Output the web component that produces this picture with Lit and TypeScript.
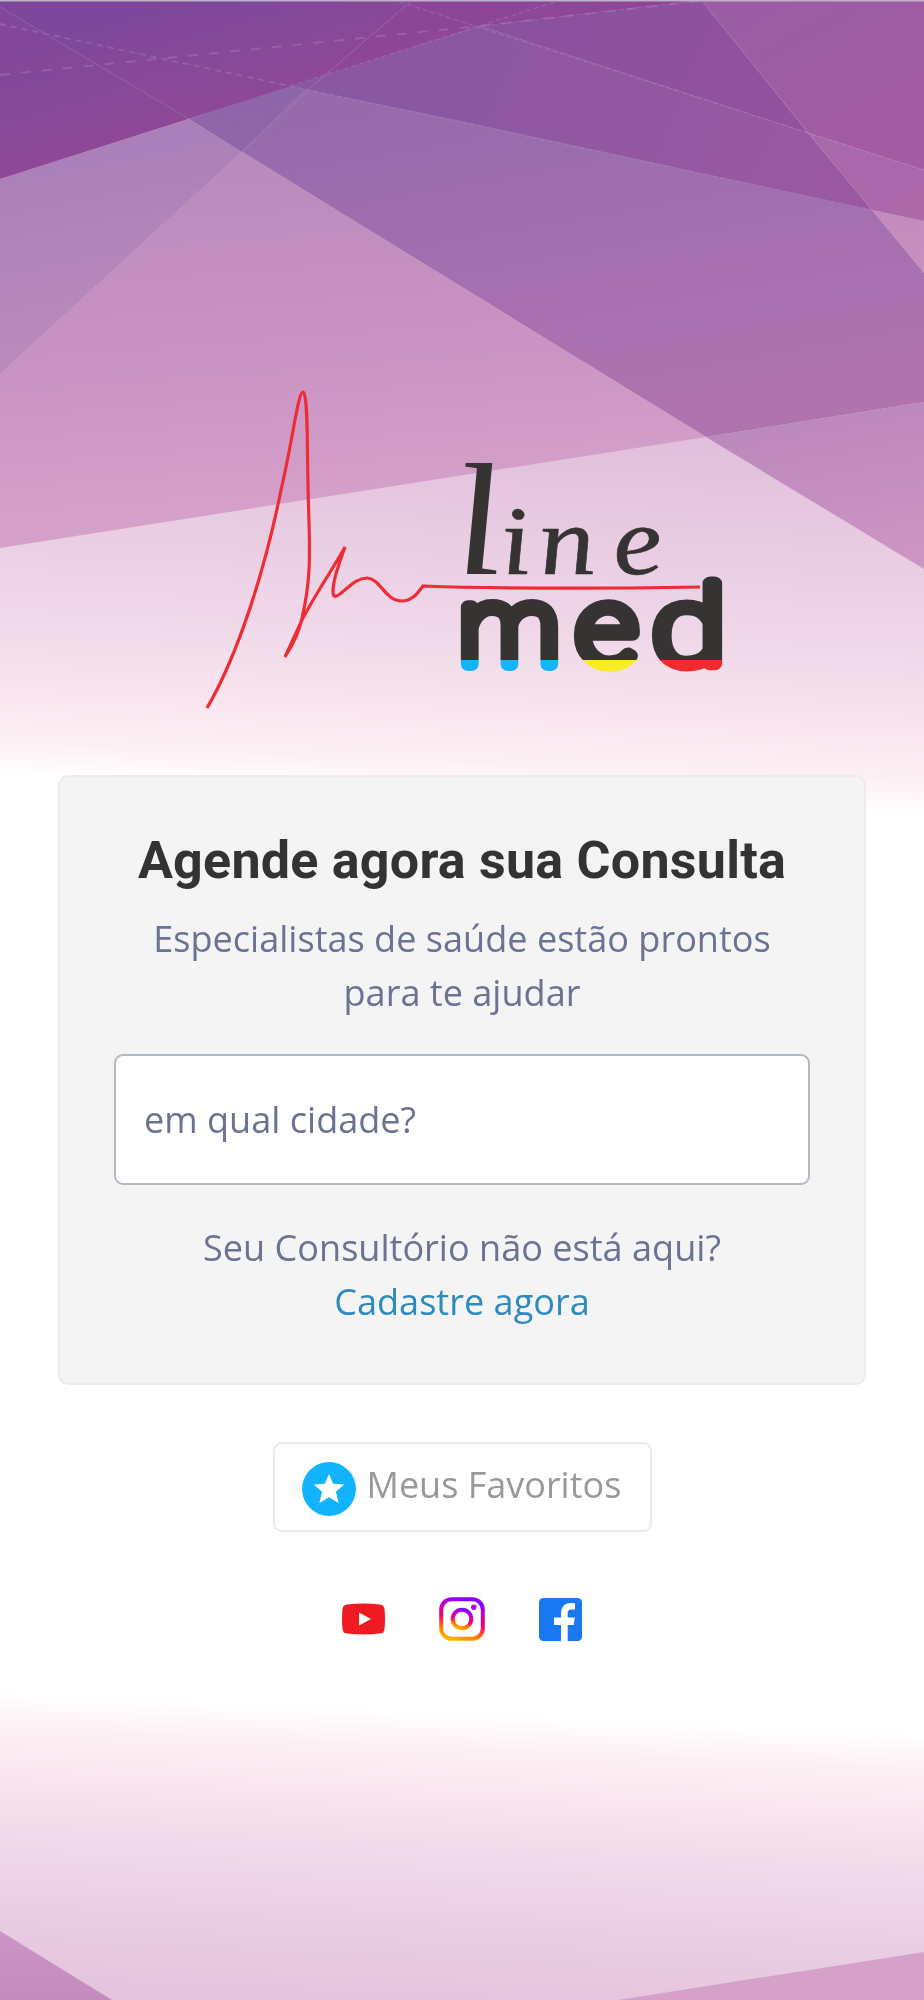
import { LitElement, html, css, svg } from "lit";
import { customElement } from "lit/decorators.js";

interface Facet { id: string; points: string; line: [number, number, number, number]; stops: [number, string][]; }

const facets: Facet[] = [
  { id: "mid", points: "242,152 310,80 480,105 872,210 924,273 924,402 706,437", line: [500, 90, 560, 430], stops: [[0, "#976aac"], [0.55, "#a470b0"], [1, "#af73ae"]] },
  { id: "lower", points: "242,152 706,437 0,548 0,374", line: [260, 152, 290, 548], stops: [[0, "#b989bd"], [0.55, "#ca95c4"], [1, "#d8a3ca"]] },
  { id: "left", points: "0,179 189,119 242,152 0,374", line: [110, 130, 150, 340], stops: [[0, "#a97fb8"], [1, "#bb8abd"]] },
  { id: "right", points: "706,437 924,402 924,569", line: [800, 400, 830, 569], stops: [[0, "#b987bc"], [1, "#cc95c3"]] },
  { id: "wedge", points: "872,210 924,221 924,273", line: [900, 210, 910, 273], stops: [[0, "#c28bbd"], [1, "#c790be"]] },
  { id: "blue", points: "189,119 290,86 314,78 242,152", line: [250, 80, 260, 150], stops: [[0, "#8c65a9"], [1, "#9066a8"]] },
  { id: "band", points: "290,86 480,26 808,133 872,210 462,121", line: [440, 40, 800, 200], stops: [[0, "#8a57a1"], [1, "#9a58a2"]] },
  { id: "tri", points: "480,26 702,0 808,133", line: [540, 10, 780, 130], stops: [[0, "#8a519e"], [1, "#93519e"]] },
  { id: "corner", points: "702,0 924,0 924,170 808,133", line: [780, 0, 860, 150], stops: [[0, "#9a5da3"], [1, "#a35ba2"]] },
  { id: "rose", points: "808,133 924,170 924,221 872,210", line: [860, 140, 900, 220], stops: [[0, "#a968a9"], [1, "#ad68a8"]] },
  { id: "dark", points: "0,0 702,0 480,26 0,179", line: [190, 0, 230, 140], stops: [[0, "#7d479b"], [0.5, "#884998"], [1, "#914797"]] },
];

@customElement("facet-backdrop")
class FacetBackdrop extends LitElement {
  static styles = css`
    :host { display: block; }
    svg { display: block; width: 100%; height: 100%; }
  `;
  render() {
    return html`<svg viewBox="0 0 924 2000" aria-hidden="true">
      <defs>
        <linearGradient id="topwash" gradientUnits="userSpaceOnUse" x1="462" y1="400" x2="445" y2="796">
          <stop offset="0" stop-color="#ddbbda"/><stop offset=".33" stop-color="#e8cce2"/>
          <stop offset=".57" stop-color="#efd7e9"/><stop offset=".7" stop-color="#f4e0eb"/>
          <stop offset=".8" stop-color="#fae6ef"/><stop offset=".91" stop-color="#fdf0f5"/>
          <stop offset="1" stop-color="#ffffff"/>
        </linearGradient>
        <linearGradient id="lowwash" gradientUnits="userSpaceOnUse" x1="462" y1="1712" x2="448" y2="2022">
          <stop offset="0" stop-color="#ffffff"/><stop offset=".12" stop-color="#fdf0f5"/>
          <stop offset=".26" stop-color="#fae6ef"/><stop offset=".37" stop-color="#f4e0eb"/>
          <stop offset=".5" stop-color="#efd8e9"/><stop offset=".75" stop-color="#e8cce2"/>
          <stop offset="1" stop-color="#e3c2dc"/>
        </linearGradient>
        <linearGradient id="pinkleft" x1="0" y1="0" x2="0" y2="1"><stop stop-color="#cb95c4"/><stop offset="1" stop-color="#c48bbf"/></linearGradient>
        ${facets.map((f) => svg`<linearGradient id=${f.id} gradientUnits="userSpaceOnUse" x1=${f.line[0]} y1=${f.line[1]} x2=${f.line[2]} y2=${f.line[3]}>
          ${f.stops.map(([o, c]) => svg`<stop offset=${o} stop-color=${c}></stop>`)}
        </linearGradient>`)}
      </defs>
      <rect width="924" height="2000" fill="#ffffff"/>
      <rect width="924" height="860" fill="url(#topwash)"/>
      <rect y="1660" width="924" height="340" fill="url(#lowwash)"/>
      ${facets.map((f) => svg`<polygon points=${f.points} fill=${`url(#${f.id})`}></polygon>`)}
      <polygon points="0,7 0,75 98,66" fill="#8a4898" opacity=".4"/>
      <polygon points="98,66 170,59 189,119" fill="#94489a" opacity=".25"/>
      <polygon points="410,0 702,0 480,26 310,80" fill="#8f4495" opacity=".5"/>
      <g fill="none" stroke="#b48bc5" stroke-width="1.3" opacity=".35">
        <path d="M0 7 189 119M410 2 310 88 242 152" opacity=".8"/>
        <path d="M702 2 872 210" opacity=".6"/>
        <path d="M0 24 290 86" stroke-dasharray="6 5" stroke-width="1.8"/>
        <path d="M0 75 480 26 700 1" stroke-dasharray="10 11" stroke-width="2"/>
        <path d="M290 86 872 210M400 2 924 170M290 86 555 2" stroke-dasharray="5 3"/>
      </g>
      <polygon points="0,1931 112,2000 0,2000" fill="url(#pinkleft)"/>
      <polygon points="924,1952 924,2000 618,2000" fill="#d6a1c9"/>
      <rect width="924" height="1.5" fill="#c0b0cc"/>
    </svg>`;
  }
}

@customElement("brand-logo")
class BrandLogo extends LitElement {
  static styles = css`
    :host { display: block; }
    svg { display: block; width: 100%; height: 100%; }
    .script { font: italic 400 98px "Liberation Serif", serif; fill: #363333; stroke: #363333; stroke-width: 0.6; }
    .tall { font-size: 160px; stroke: none; }
    .round { font: 100 107px Roboto, sans-serif; stroke-width: 14.5; stroke-linejoin: round; stroke-linecap: round; vector-effect: non-scaling-stroke; }
  `;
  render() {
    const tint = (id: string, c: string) => svg`<linearGradient id=${id} gradientUnits="userSpaceOnUse" x1="0" y1="-103.5" x2="0" y2="16.5">
      <stop offset=".832" stop-color="#363333"></stop><stop offset=".837" stop-color=${c}></stop></linearGradient>`;
    return html`<svg viewBox="200 380 530 340" role="img" aria-label="An line med">
      <defs>${tint("cyan", "#12b4ff")}${tint("yellow", "#f8ec24")}${tint("red", "#ef2b30")}</defs>
      <text class="script" transform="translate(0 574) skewX(6) scale(1.14 1)"><tspan class="tall" x="401">l</tspan><tspan x="441 475 540">ine</tspan></text>
      <text class="round" transform="translate(459.5 663.5) scale(1.04 1)" fill="url(#cyan)" stroke="url(#cyan)">m</text>
      <text class="round" transform="translate(576.5 663.5) scale(1.12 1)" fill="url(#yellow)" stroke="url(#yellow)">e</text>
      <text class="round" transform="translate(652 663.5) scale(1.25 1)" fill="url(#red)" stroke="url(#red)">d</text>
      <path fill="none" stroke="#ee2c34" stroke-width="3.2" stroke-linejoin="miter" stroke-miterlimit="3"
        d="M207 708C238 655 265 570 281 490C293 439 298 392 303 392C308 394 307 440 308 485C309 540 313 572 302 618C299 634 292 646 285 657L302 620C317 591 333 569 345 547C338 567 333 580 333 592C333 599 337 596 340 594C350 586 357 578 367 578C380 578 385 601 402 601C413 601 418 592 423 586C480 588 580 589 700 587"/>
    </svg>`;
  }
}

@customElement("app-root")
class AppRoot extends LitElement {
  static styles = css`
    :host { display: block; font-family: "Open Sans", "Noto Sans", sans-serif; color: #6c7293; }
    * { box-sizing: border-box; }
    .page { display: grid; width: 924px; height: 2000px; overflow: hidden; }
    .back, .content { grid-area: 1 / 1; }
    .content { z-index: 1; display: flex; flex-direction: column; align-items: center; padding-top: 380px; }
    .logo { width: 530px; height: 340px; margin-left: 6px; }
    .card { width: 808px; height: 610px; margin-top: 55px; padding: 49px 54px 0; background: #f4f4f4; border: 2px solid #ececec; border-radius: 10px; text-align: center; font-size: 36.1px; line-height: 54px; }
    h1 { margin: 0; font: 700 52px/70px Roboto, sans-serif; letter-spacing: 0.24px; color: #333; white-space: nowrap; }
    p { margin: 15px 0 0; white-space: nowrap; }
    .city { display: block; width: 100%; height: 131px; margin-top: 35px; padding: 0 28px 2px; border: 2px solid #b1b8c1; border-radius: 9px; background: #fff; font: inherit; color: #6c7293; }
    .city::placeholder { color: #6c7293; opacity: 1; }
    .ask { margin-top: 35px; }
    a { color: #2e8bbd; text-decoration: none; }
    .fav { display: flex; align-items: flex-start; width: 379px; height: 90px; margin-top: 57px; padding: 18px 0 0 27px; border: 2px solid #ebebeb; border-radius: 9px; background: #fff; font: 400 36px/50px "Open Sans", sans-serif; color: #999; white-space: nowrap; }
    .fav svg { width: 54px; height: 54px; margin-right: 11px; flex: none; }
    .fav span { margin-top: -2px; }
    .social { display: flex; align-items: center; gap: 54px; margin-top: 65px; height: 44px; }
    .social svg { display: block; }
  `;
  render() {
    return html`<div class="page">
      <facet-backdrop class="back"></facet-backdrop>
      <main class="content">
        <brand-logo class="logo"></brand-logo>
        <section class="card">
          <h1>Agende agora sua Consulta</h1>
          <p>Especialistas de saúde estão prontos<br>para te ajudar</p>
          <input class="city" placeholder="em qual cidade?">
          <p class="ask">Seu Consultório não está aqui?<br><a href="#">Cadastre agora</a></p>
        </section>
        <button class="fav">
          <svg viewBox="0 0 54 54"><circle cx="27" cy="27" r="27" fill="#12b4ff"/><path fill="#fff" d="M27 12l4.2 9.8 11 .8-8.3 7.1 2.7 11.3-9.6-5.8L17.4 41l2.7-11.3-8.3-7.1 11-.8z"/></svg>
          <span>Meus Favoritos</span>
        </button>
        <nav class="social">
          <svg width="43" height="32" viewBox="0 0 43 32"><path fill="#ee1c22" d="M5 1.5Q21.500-.5 38 1.500Q42 2 42.500 6Q43.500 16 42.500 26Q42 30 38 30.500Q21.500 32.500 5 30.500Q1 30 .5 26Q-.5 16 .5 6Q1 2 5 1.500z"/><path fill="#fff" d="M17 9.500v13L29 16z"/></svg>
          <svg width="46" height="44" viewBox="0 0 46 44"><defs>
            <linearGradient id="ig" x1=".2" y1="1" x2=".5" y2="0"><stop stop-color="#ffb500"/><stop offset=".22" stop-color="#ff7a00"/><stop offset=".48" stop-color="#f5006e"/><stop offset=".75" stop-color="#d000b8"/><stop offset="1" stop-color="#8a00ff"/></linearGradient></defs>
            <rect x="2.200" y="2.200" width="41.600" height="39.600" rx="10.500" fill="none" stroke="url(#ig)" stroke-width="4"/><circle cx="23" cy="22" r="9.300" fill="none" stroke="url(#ig)" stroke-width="4"/><circle cx="34.800" cy="10.300" r="2.700" fill="#b800d0"/></svg>
          <svg width="43" height="43" viewBox="0 0 43 43"><rect width="43" height="43" rx="4.500" fill="#1778f2"/><path fill="#fff" d="M22 43V27h-7v-7.500h7v-4C22 8.500 26 5 31.500 5c2 0 3.500.1 4.500.3v6.200h-3.500c-3.200 0-3.800 1.700-3.800 4v4h7.100L34.700 27h-6V43z"/></svg>
        </nav>
      </main>
    </div>`;
  }
}
